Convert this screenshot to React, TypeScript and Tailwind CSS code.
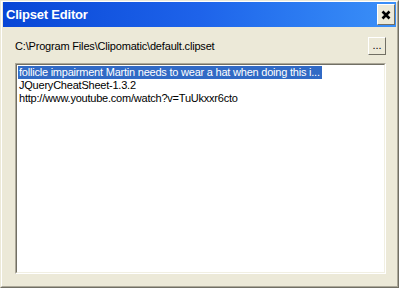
import React from "react";

export default function App() {
  const font = { fontFamily: '"Liberation Sans", Arial, sans-serif' };
  return (
    <div
      className="w-[399px] h-[288px] bg-[#ece9d8] border border-t-[#ece9d8] border-l-[#ece9d8] border-r-[#716f64] border-b-[#716f64] overflow-hidden"
      style={font}
    >
      <div className="w-full h-full border border-t-white border-l-white border-r-[#aca899] border-b-[#aca899] flex flex-col px-px">
        {/* title bar */}
        <div className="h-[25px] bg-gradient-to-r from-[#0846d6] via-[#1e63ea] to-[#3b90f8] flex items-center justify-between pl-[3px] pr-[1px]">
          <span className="text-white font-bold text-[13px] leading-none tracking-[-0.2px]">Clipset Editor</span>
          <div className="w-[18px] h-[21px] bg-[#ece9d8] border border-t-white border-l-white border-r-[#716f64] border-b-[#716f64] flex items-center justify-center">
            <svg width="10" height="10" viewBox="0 0 10 10">
              <path d="M1.5 1.5 L8.5 8.5 M8.5 1.5 L1.5 8.5" stroke="#000" strokeWidth="2.6" />
            </svg>
          </div>
        </div>
        {/* body */}
        <div className="flex flex-col pl-[12px] pt-[10px]">
          <div className="flex items-center justify-between w-[371px] h-[18px]">
            <span className="text-[11px] text-black leading-none tracking-[-0.18px]">C:\Program Files\Clipomatic\default.clipset</span>
            <div className="w-[18px] h-[18px] bg-[#ece9d8] border border-t-white border-l-white border-r-[#716f64] border-b-[#716f64] flex items-end justify-center pb-[3px]">
              <span className="text-[11px] leading-none text-black">...</span>
            </div>
          </div>
          <div className="mt-[8px] w-[371px] h-[211px] border border-t-[#aca899] border-l-[#aca899] border-r-white border-b-white">
            <div className="w-full h-full bg-white border border-t-[#716f64] border-l-[#716f64] border-r-[#f1efe2] border-b-[#f1efe2] pt-px pl-px">
              <div className="text-[11px] leading-[13px] text-black tracking-[-0.22px]">
                <div>
                  <span className="bg-[#316ac5] text-white inline-block pl-[1px] pr-[2px]">follicle impairment Martin needs to wear a hat when doing this i...</span>
                </div>
                <div className="pl-[1px]">JQueryCheatSheet-1.3.2</div>
                <div className="pl-[1px]">http://www.youtube.com/watch?v=TuUkxxr6cto</div>
              </div>
            </div>
          </div>
        </div>
      </div>
    </div>
  );
}
